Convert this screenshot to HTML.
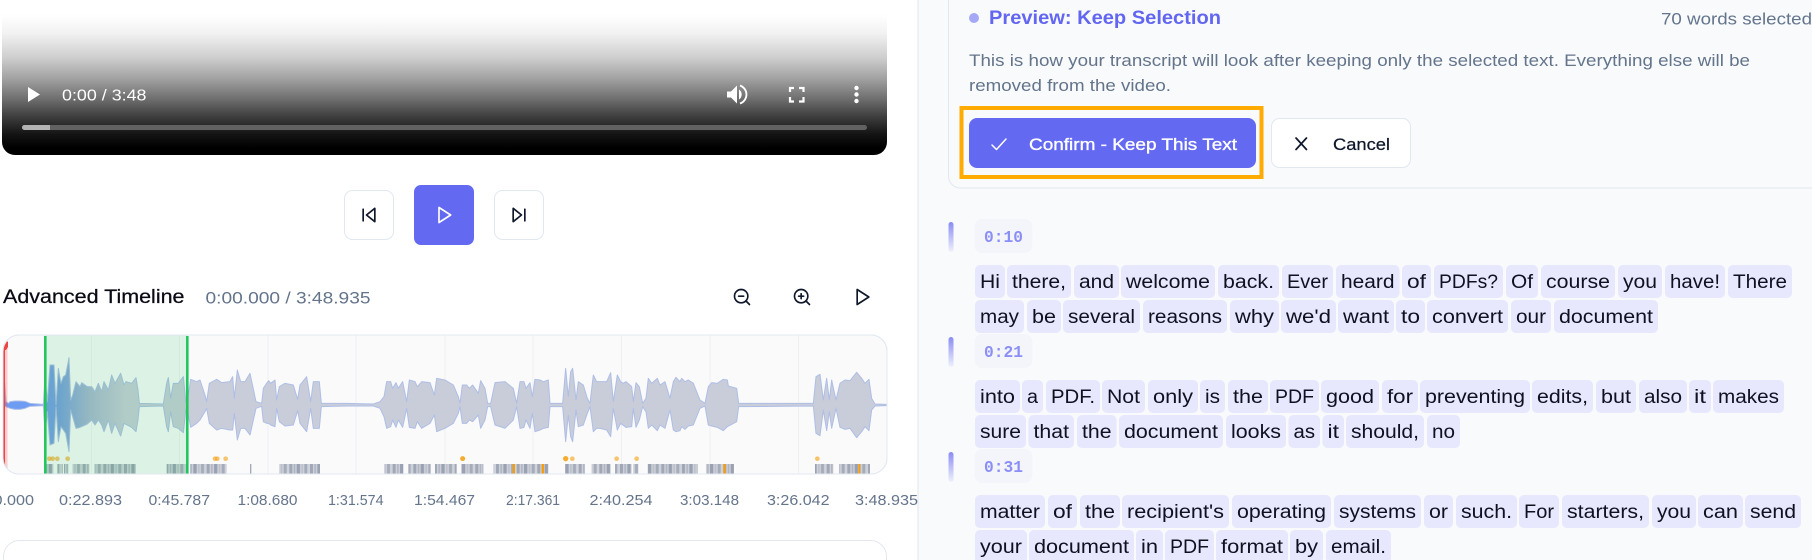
<!DOCTYPE html>
<html><head><meta charset="utf-8"><title>Editor</title>
<style>
html,body{margin:0;padding:0;background:#fff;width:1812px;height:560px;overflow:hidden}
svg{display:block;position:absolute;left:0;top:0}
text{font-family:"Liberation Sans",sans-serif}
.w rect{height:33px;y:-23px;rx:5px;ry:5px;fill:#e7e7fd}
.w text{font-size:19px;fill:#0f1020}
.lb text{font-size:15px;fill:#64748b}
.ic{fill:none;stroke:#0f172a;stroke-width:2;stroke-linecap:round;stroke-linejoin:round}
.b{fill:#fff;stroke:#e2e8f0;stroke-width:1}
.chip{fill:#f3f5fa}
.mono{font-family:"Liberation Mono",monospace;font-size:17px;font-weight:700;fill:#8b8ef5}
</style></head><body>
<svg xmlns="http://www.w3.org/2000/svg" width="1812" height="560" viewBox="0 0 1812 560">
<defs>
<linearGradient id="vg" x1="0" y1="0" x2="0" y2="1">
<stop offset="0" stop-color="#fff"/><stop offset=".13" stop-color="#f2f2f2"/><stop offset=".3" stop-color="#cfcfcf"/><stop offset=".45" stop-color="#a3a3a3"/><stop offset=".6" stop-color="#6e6e6e"/><stop offset=".72" stop-color="#404040"/><stop offset=".85" stop-color="#141414"/><stop offset=".95" stop-color="#000"/><stop offset="1" stop-color="#000"/>
</linearGradient>
<linearGradient id="wf" gradientUnits="userSpaceOnUse" x1="0" y1="0" x2="900" y2="0">
<stop offset="0" stop-color="#6e9cf3"/><stop offset=".12" stop-color="#6e9cf3"/><stop offset=".2" stop-color="#7a9fe0"/><stop offset=".3" stop-color="#aab7d2"/><stop offset=".42" stop-color="#c9cdd9"/><stop offset="1" stop-color="#c9cdd9"/>
</linearGradient>
<linearGradient id="bar" x1="0" y1="0" x2="0" y2="1"><stop offset="0" stop-color="#8a8cf5"/><stop offset="1" stop-color="#8a8cf5" stop-opacity=".08"/></linearGradient>
<pattern id="st" patternUnits="userSpaceOnUse" width="62" height="30" x="0" y="552">
<rect width="62" height="30" fill="#cfd2da"/>
<rect x="0" width="9" height="30" fill="#a0a7b6"/><rect x="13" width="5" height="30" fill="#b0b5c2"/><rect x="22" width="10" height="30" fill="#99a1b2"/><rect x="36" width="5" height="30" fill="#bcc0cb"/><rect x="45" width="9" height="30" fill="#a5acba"/>
</pattern>
<clipPath id="tl"><rect x="3.5" y="335.5" width="884" height="139" rx="16"/></clipPath>
<clipPath id="left"><rect x="0" y="0" width="918" height="560"/></clipPath>
</defs>

<!-- video -->
<path d="M2 15H887V142a13 13 0 0 1-13 13H15a13 13 0 0 1-13-13Z" fill="url(#vg)"/>
<path d="M28 87L40 94.5L28 102Z" fill="#fff"/>
<text x="62" y="100.500" font-size="16" fill="#fff" textLength="84.500" lengthAdjust="spacingAndGlyphs">0:00 / 3:48</text>
<rect x="22" y="125" width="845" height="5" rx="2.5" fill="#616161"/>
<path d="M24.5 125H50V130H24.5a2.5 2.5 0 0 1 0-5Z" fill="#b3b3b3"/>
<path d="M727 91.500h4l6-6v18l-6-6h-4Z" fill="#fff"/>
<path d="M739 89.500a6 6 0 0 1 0 10Z" fill="#fff"/><path d="M740 85.500a9.500 9.500 0 0 1 0 18" fill="none" stroke="#fff" stroke-width="1.800"/>
<path d="M790 92v-4h4M799 88h4.500v4M803.500 97v4.500h-4.500M794 101.500h-4v-4.500" fill="none" stroke="#fff" stroke-width="2.200"/>
<circle cx="856.500" cy="88" r="2.200" fill="#fff"/><circle cx="856.500" cy="94.500" r="2.200" fill="#fff"/><circle cx="856.500" cy="101" r="2.200" fill="#fff"/>

<!-- transport -->
<rect class="b" x="344.5" y="190.5" width="49" height="49" rx="8"/>
<g class="ic" transform="translate(359 205) scale(.8333)"><polygon points="19 20 9 12 19 4"/><line x1="5" y1="19" x2="5" y2="5"/></g>
<rect x="414" y="185" width="60" height="60" rx="7" fill="#6469f2"/>
<g class="ic" transform="translate(434 205) scale(.8333)" style="stroke:#fff"><polygon points="6 3 20 12 6 21"/></g>
<rect class="b" x="494.5" y="190.5" width="49" height="49" rx="8"/>
<g class="ic" transform="translate(509 205) scale(.8333)"><polygon points="5 4 15 12 5 20"/><line x1="19" y1="5" x2="19" y2="19"/></g>

<!-- timeline header -->
<text x="3" y="303" font-size="19" fill="#0a0a14" stroke="#0a0a14" stroke-width=".25" textLength="181.5" lengthAdjust="spacingAndGlyphs">Advanced Timeline</text>
<text x="205.5" y="303.500" font-size="17" fill="#64748b" textLength="165" lengthAdjust="spacingAndGlyphs">0:00.000 / 3:48.935</text>
<g class="ic" transform="translate(732 287) scale(.8333)"><circle cx="11" cy="11" r="8"/><line x1="21" y1="21" x2="16.65" y2="16.65"/><line x1="8" y1="11" x2="14" y2="11"/></g>
<g class="ic" transform="translate(792 287) scale(.8333)"><circle cx="11" cy="11" r="8"/><line x1="21" y1="21" x2="16.65" y2="16.65"/><line x1="11" y1="8" x2="11" y2="14"/><line x1="8" y1="11" x2="14" y2="11"/></g>
<g class="ic" transform="translate(853 287) scale(.8333)"><polygon points="5 3 19 12 5 21"/></g>

<!-- timeline -->
<rect x="3" y="335" width="884" height="139" rx="16" fill="#fafafb" stroke="#e2e8f0"/>
<g clip-path="url(#tl)">
<g stroke="#f0f0f3" stroke-width="1"><line x1="91.5" y1="335" x2="91.5" y2="474"/><line x1="179.5" y1="335" x2="179.5" y2="474"/><line x1="268" y1="335" x2="268" y2="474"/><line x1="356" y1="335" x2="356" y2="474"/><line x1="445" y1="335" x2="445" y2="474"/><line x1="533" y1="335" x2="533" y2="474"/><line x1="621.5" y1="335" x2="621.5" y2="474"/><line x1="710" y1="335" x2="710" y2="474"/><line x1="798.5" y1="335" x2="798.5" y2="474"/></g>
<g transform="translate(0 340) scale(.33333)">
<polygon fill="url(#wf)" stroke="#aebee6" stroke-width="3" stroke-linejoin="round" points="12,192 14,130 18,185 25,190 30,185 45,183 60,183 75,184 90,190 130,193 135,110 142,185 150,75 162,75 168,195 175,85 183,130 190,110 197,105 207,53 212,180 218,165 228,125 240,140 245,128 262,140 275,140 285,155 295,130 305,155 312,125 325,150 335,105 345,130 362,100 372,135 378,125 395,130 408,113 414,150 418,190 490,192 500,130 505,113 512,175 520,130 535,130 550,110 558,190 565,165 572,118 590,125 600,120 615,165 620,185 628,130 650,118 665,128 690,125 698,110 703,175 712,90 722,125 735,125 750,100 768,185 785,190 790,145 800,130 806,122 812,130 825,120 830,180 838,140 855,130 880,135 893,178 900,135 920,110 932,185 940,125 958,125 964,190 1040,190 1120,192 1140,185 1152,170 1160,125 1172,125 1178,145 1188,128 1195,145 1208,125 1220,185 1228,120 1245,125 1252,140 1265,125 1290,128 1303,165 1310,115 1335,120 1360,135 1375,170 1380,190 1387,135 1400,135 1408,145 1418,135 1435,160 1442,122 1455,145 1463,190 1472,190 1485,128 1515,125 1540,145 1550,190 1560,125 1572,125 1578,145 1590,128 1597,170 1605,118 1620,120 1630,125 1645,120 1650,190 1688,190 1697,85 1705,170 1712,95 1718,85 1728,180 1735,125 1750,135 1762,175 1770,190 1780,105 1790,125 1800,125 1820,125 1832,98 1840,185 1852,105 1862,125 1870,130 1878,125 1895,140 1900,185 1908,128 1918,140 1928,190 1938,175 1945,115 1955,130 1972,115 1980,135 1995,125 2010,175 2020,125 2028,112 2040,125 2045,115 2055,125 2065,120 2080,130 2100,180 2115,190 2125,140 2135,128 2152,130 2170,118 2182,120 2185,138 2210,145 2216,190 2440,190 2448,110 2460,103 2470,180 2480,115 2488,180 2495,120 2508,180 2520,130 2535,120 2550,122 2570,97 2585,115 2595,130 2607,118 2615,175 2625,192 2658,193 2658,197 2625,198 2615,210 2607,272 2595,260 2585,275 2570,293 2550,265 2535,268 2520,262 2508,205 2495,265 2488,215 2480,272 2470,210 2460,287 2448,280 2440,198 2216,200 2210,245 2182,260 2170,272 2152,262 2135,258 2125,255 2115,198 2100,205 2080,255 2065,258 2055,268 2045,260 2040,272 2028,275 2020,270 2010,210 1995,265 1980,255 1972,272 1955,255 1945,265 1938,215 1928,200 1918,240 1908,262 1900,205 1895,260 1878,262 1862,250 1852,270 1840,205 1832,290 1820,270 1800,265 1790,265 1780,275 1770,200 1762,220 1750,255 1735,260 1728,210 1718,305 1712,290 1705,225 1697,305 1688,200 1650,200 1645,262 1630,265 1620,270 1605,275 1597,220 1590,265 1578,240 1572,262 1560,265 1550,200 1540,240 1515,265 1485,255 1472,200 1463,200 1455,240 1442,265 1435,225 1418,245 1408,240 1400,250 1387,250 1380,200 1375,220 1360,250 1335,265 1310,275 1303,225 1290,250 1265,265 1252,245 1245,265 1228,262 1220,205 1208,262 1195,240 1188,262 1178,240 1172,260 1160,265 1152,230 1140,205 1120,198 1040,198 964,200 958,265 940,265 932,205 920,275 900,250 893,212 880,255 855,258 838,245 830,205 825,260 812,255 806,250 800,250 790,245 785,199 768,205 750,285 735,265 722,265 712,300 703,220 698,270 690,270 665,265 650,270 628,250 620,205 615,215 600,240 590,250 572,262 565,225 558,205 550,278 535,265 520,260 512,215 505,275 500,260 490,198 418,200 414,240 408,275 395,262 372,250 362,288 345,250 335,280 325,240 312,275 305,255 295,240 285,255 275,240 262,252 240,262 228,265 218,230 212,210 207,335 197,280 190,270 183,260 175,305 168,200 162,310 150,315 142,215 135,280 130,197 90,199 75,205 60,208 45,208 30,205 25,203 12,198"/>
</g>
<g transform="translate(0 280) scale(.33333)">
<g fill="#f59e0b" fill-opacity=".6"><circle cx="148" cy="536" r="7"/><circle cx="158" cy="536" r="7"/><circle cx="172" cy="536" r="7"/><circle cx="203" cy="536" r="7"/><circle cx="645" cy="536" r="7"/><circle cx="652" cy="536" r="7"/><circle cx="677" cy="536" r="7"/><circle cx="1388" cy="536" r="7.5" fill-opacity=".85"/><circle cx="1697" cy="536" r="8" fill-opacity=".85"/><circle cx="1717" cy="536" r="7"/><circle cx="1850" cy="536" r="7"/><circle cx="1910" cy="536" r="7"/><circle cx="2452" cy="536" r="7"/></g>
<g fill="url(#st)"><rect x="135" y="552" width="25" height="30"/><rect x="172" y="552" width="16" height="30"/><rect x="192" y="552" width="13" height="30"/><rect x="218" y="552" width="50" height="30"/><rect x="283" y="552" width="125" height="30"/><rect x="500" y="552" width="58" height="30"/><rect x="570" y="552" width="110" height="30"/><rect x="750" y="552" width="5" height="30"/><rect x="838" y="552" width="122" height="30"/><rect x="1153" y="552" width="57" height="30"/><rect x="1225" y="552" width="67" height="30"/><rect x="1305" y="552" width="65" height="30"/><rect x="1383" y="552" width="67" height="30"/><rect x="1480" y="552" width="165" height="30"/><rect x="1695" y="552" width="60" height="30"/><rect x="1775" y="552" width="57" height="30"/><rect x="1845" y="552" width="50" height="30"/><rect x="1900" y="552" width="15" height="30"/><rect x="1943" y="552" width="150" height="30"/><rect x="2118" y="552" width="84" height="30"/><rect x="2445" y="552" width="55" height="30"/><rect x="2517" y="552" width="93" height="30"/></g>
<g fill="#f59e0b"><rect x="1538" y="552" width="7" height="30"/><rect x="1625" y="552" width="7" height="30"/><rect x="2170" y="552" width="7" height="30"/><rect x="2575" y="552" width="6" height="30"/></g>
</g>
<rect x="44" y="335" width="144" height="139" fill="#22c55e" fill-opacity=".14"/>
<rect x="44" y="336" width="2.6" height="138" fill="#22c55e"/><rect x="186" y="336" width="2.6" height="138" fill="#22c55e"/>
<rect x="3" y="335" width="2" height="139" fill="#ef4444"/><rect x="5" y="335" width="2.500" height="139" fill="#ef4444" fill-opacity=".25"/>
<path d="M3 345a3 5 0 0 1 5-3v5l-2 3h-3Z" fill="#ef4444"/>
</g>
<rect x="3" y="335" width="884" height="139" rx="16" fill="none" stroke="#e2e8f0"/>

<!-- labels -->
<g class="lb" clip-path="url(#left)">
<text x="-29" y="505" textLength="63" lengthAdjust="spacingAndGlyphs">0:00.000</text>
<text x="59" y="505" textLength="63" lengthAdjust="spacingAndGlyphs">0:22.893</text>
<text x="148.5" y="505" textLength="61.5" lengthAdjust="spacingAndGlyphs">0:45.787</text>
<text x="237.5" y="505" textLength="60" lengthAdjust="spacingAndGlyphs">1:08.680</text>
<text x="328" y="505" textLength="55.5" lengthAdjust="spacingAndGlyphs">1:31.574</text>
<text x="414" y="505" textLength="61" lengthAdjust="spacingAndGlyphs">1:54.467</text>
<text x="506" y="505" textLength="54" lengthAdjust="spacingAndGlyphs">2:17.361</text>
<text x="589.5" y="505" textLength="63" lengthAdjust="spacingAndGlyphs">2:40.254</text>
<text x="680" y="505" textLength="59" lengthAdjust="spacingAndGlyphs">3:03.148</text>
<text x="767" y="505" textLength="62.5" lengthAdjust="spacingAndGlyphs">3:26.042</text>
<text x="855" y="505" textLength="63" lengthAdjust="spacingAndGlyphs">3:48.935</text>
</g>
<rect x="3.5" y="540.5" width="883" height="40" rx="16" fill="#fff" stroke="#e2e8f0"/>

<!-- right panel -->
<rect x="918" y="0" width="894" height="560" fill="#f8fafc"/>
<line x1="918" y1="0" x2="918" y2="560" stroke="#e2e8f0"/>
<rect x="948.5" y="-30" width="900" height="218" rx="12" fill="#f8fafc" stroke="#e2e8f0"/>
<circle cx="974" cy="18" r="5" fill="#a5a8f6"/>
<text x="989" y="24" font-size="19" font-weight="700" fill="#6366f1" textLength="232" lengthAdjust="spacingAndGlyphs">Preview: Keep Selection</text>
<text x="1661" y="24.5" font-size="17" fill="#64748b" textLength="151" lengthAdjust="spacingAndGlyphs">70 words selected</text>
<text x="969" y="66" font-size="17" fill="#64748b" textLength="781" lengthAdjust="spacingAndGlyphs">This is how your transcript will look after keeping only the selected text. Everything else will be</text>
<text x="969" y="91" font-size="17" fill="#64748b" textLength="202" lengthAdjust="spacingAndGlyphs">removed from the video.</text>
<rect x="961.5" y="108" width="300" height="69" fill="none" stroke="#ffab00" stroke-width="4"/>
<rect x="969" y="118" width="287" height="50" rx="8" fill="#6469f2"/>
<path d="M992 145l4.5 4.5L1006 139" fill="none" stroke="#fff" stroke-width="1.500" stroke-linecap="round" stroke-linejoin="round"/>
<text x="1029" y="150" font-size="17" fill="#fff" stroke="#fff" stroke-width=".35" textLength="208" lengthAdjust="spacingAndGlyphs">Confirm - Keep This Text</text>
<rect x="1271.5" y="118.5" width="139" height="49" rx="8" fill="#fff" stroke="#e2e8f0"/>
<path d="M1296 138l10.500 11.500M1306.500 138L1296 149.500" fill="none" stroke="#0f172a" stroke-width="1.700" stroke-linecap="round"/>
<text x="1333" y="150" font-size="17" fill="#0f172a" stroke="#0f172a" stroke-width=".25" textLength="57" lengthAdjust="spacingAndGlyphs">Cancel</text>

<!-- segment markers -->
<rect x="948.500" y="222" width="5" height="30" rx="2.500" fill="url(#bar)"/>
<rect class="chip" x="974.500" y="219" width="58" height="34" rx="8"/>
<text class="mono" x="984" y="242" textLength="39" lengthAdjust="spacingAndGlyphs">0:10</text>
<rect x="948.500" y="337" width="5" height="30" rx="2.500" fill="url(#bar)"/>
<rect class="chip" x="974.500" y="334" width="58" height="34" rx="8"/>
<text class="mono" x="984" y="357" textLength="39" lengthAdjust="spacingAndGlyphs">0:21</text>
<rect x="948.500" y="452" width="5" height="30" rx="2.500" fill="url(#bar)"/>
<rect class="chip" x="974.500" y="449" width="58" height="34" rx="8"/>
<text class="mono" x="984" y="472" textLength="39" lengthAdjust="spacingAndGlyphs">0:31</text>

<!-- rows -->
<g class="w" transform="translate(0 288)">
<rect x="975" width="30"/><text x="980" textLength="20" lengthAdjust="spacingAndGlyphs">Hi</text>
<rect x="1007" width="64"/><text x="1012" textLength="54" lengthAdjust="spacingAndGlyphs">there,</text>
<rect x="1074" width="45"/><text x="1079" textLength="35" lengthAdjust="spacingAndGlyphs">and</text>
<rect x="1121" width="94"/><text x="1126" textLength="84" lengthAdjust="spacingAndGlyphs">welcome</text>
<rect x="1218" width="61"/><text x="1223" textLength="51" lengthAdjust="spacingAndGlyphs">back.</text>
<rect x="1282" width="51"/><text x="1287" textLength="41" lengthAdjust="spacingAndGlyphs">Ever</text>
<rect x="1336" width="63.500"/><text x="1341" textLength="53.500" lengthAdjust="spacingAndGlyphs">heard</text>
<rect x="1402" width="29"/><text x="1407" textLength="19" lengthAdjust="spacingAndGlyphs">of</text>
<rect x="1434" width="69"/><text x="1439" textLength="59" lengthAdjust="spacingAndGlyphs">PDFs?</text>
<rect x="1506" width="32"/><text x="1511" textLength="22" lengthAdjust="spacingAndGlyphs">Of</text>
<rect x="1541" width="74"/><text x="1546" textLength="64" lengthAdjust="spacingAndGlyphs">course</text>
<rect x="1618" width="44"/><text x="1623" textLength="34" lengthAdjust="spacingAndGlyphs">you</text>
<rect x="1665" width="60"/><text x="1670" textLength="50" lengthAdjust="spacingAndGlyphs">have!</text>
<rect x="1728" width="64"/><text x="1733" textLength="54" lengthAdjust="spacingAndGlyphs">There</text>
</g>
<g class="w" transform="translate(0 323)">
<rect x="975" width="49"/><text x="980" textLength="39" lengthAdjust="spacingAndGlyphs">may</text>
<rect x="1027" width="34"/><text x="1032" textLength="24" lengthAdjust="spacingAndGlyphs">be</text>
<rect x="1063" width="77"/><text x="1068" textLength="67" lengthAdjust="spacingAndGlyphs">several</text>
<rect x="1143" width="84"/><text x="1148" textLength="74" lengthAdjust="spacingAndGlyphs">reasons</text>
<rect x="1230" width="49"/><text x="1235" textLength="39" lengthAdjust="spacingAndGlyphs">why</text>
<rect x="1281" width="55"/><text x="1286" textLength="45" lengthAdjust="spacingAndGlyphs">we'd</text>
<rect x="1338" width="56"/><text x="1343" textLength="46" lengthAdjust="spacingAndGlyphs">want</text>
<rect x="1396" width="29"/><text x="1401" textLength="19" lengthAdjust="spacingAndGlyphs">to</text>
<rect x="1427" width="81"/><text x="1432" textLength="71" lengthAdjust="spacingAndGlyphs">convert</text>
<rect x="1511" width="40"/><text x="1516" textLength="30" lengthAdjust="spacingAndGlyphs">our</text>
<rect x="1554" width="104"/><text x="1559" textLength="94" lengthAdjust="spacingAndGlyphs">document</text>
</g>
<g class="w" transform="translate(0 403)">
<rect x="975" width="45"/><text x="980" textLength="35" lengthAdjust="spacingAndGlyphs">into</text>
<rect x="1022" width="21"/><text x="1027" textLength="11" lengthAdjust="spacingAndGlyphs">a</text>
<rect x="1046" width="54"/><text x="1051" textLength="44" lengthAdjust="spacingAndGlyphs">PDF.</text>
<rect x="1102" width="43"/><text x="1107" textLength="33" lengthAdjust="spacingAndGlyphs">Not</text>
<rect x="1148" width="50"/><text x="1153" textLength="40" lengthAdjust="spacingAndGlyphs">only</text>
<rect x="1200" width="25"/><text x="1205" textLength="15" lengthAdjust="spacingAndGlyphs">is</text>
<rect x="1228" width="40"/><text x="1233" textLength="30" lengthAdjust="spacingAndGlyphs">the</text>
<rect x="1270" width="49"/><text x="1275" textLength="39" lengthAdjust="spacingAndGlyphs">PDF</text>
<rect x="1321" width="58"/><text x="1326" textLength="48" lengthAdjust="spacingAndGlyphs">good</text>
<rect x="1382" width="36"/><text x="1387" textLength="26" lengthAdjust="spacingAndGlyphs">for</text>
<rect x="1420" width="110"/><text x="1425" textLength="100" lengthAdjust="spacingAndGlyphs">preventing</text>
<rect x="1532" width="61"/><text x="1537" textLength="51" lengthAdjust="spacingAndGlyphs">edits,</text>
<rect x="1596" width="40"/><text x="1601" textLength="30" lengthAdjust="spacingAndGlyphs">but</text>
<rect x="1639" width="48"/><text x="1644" textLength="38" lengthAdjust="spacingAndGlyphs">also</text>
<rect x="1689" width="22"/><text x="1694" textLength="12" lengthAdjust="spacingAndGlyphs">it</text>
<rect x="1713" width="71"/><text x="1718" textLength="61" lengthAdjust="spacingAndGlyphs">makes</text>
</g>
<g class="w" transform="translate(0 438)">
<rect x="975" width="51"/><text x="980" textLength="41" lengthAdjust="spacingAndGlyphs">sure</text>
<rect x="1028.500" width="45.500"/><text x="1033.500" textLength="35.500" lengthAdjust="spacingAndGlyphs">that</text>
<rect x="1077" width="39.500"/><text x="1082" textLength="29.500" lengthAdjust="spacingAndGlyphs">the</text>
<rect x="1119" width="104"/><text x="1124" textLength="94" lengthAdjust="spacingAndGlyphs">document</text>
<rect x="1226" width="60"/><text x="1231" textLength="50" lengthAdjust="spacingAndGlyphs">looks</text>
<rect x="1288.500" width="31.500"/><text x="1293.500" textLength="21.500" lengthAdjust="spacingAndGlyphs">as</text>
<rect x="1322.500" width="21.500"/><text x="1327.500" textLength="11.500" lengthAdjust="spacingAndGlyphs">it</text>
<rect x="1346" width="78"/><text x="1351" textLength="68" lengthAdjust="spacingAndGlyphs">should,</text>
<rect x="1427" width="33"/><text x="1432" textLength="23" lengthAdjust="spacingAndGlyphs">no</text>
</g>
<g class="w" transform="translate(0 518)">
<rect x="975" width="70"/><text x="980" textLength="60" lengthAdjust="spacingAndGlyphs">matter</text>
<rect x="1048" width="29"/><text x="1053" textLength="19" lengthAdjust="spacingAndGlyphs">of</text>
<rect x="1080" width="40"/><text x="1085" textLength="30" lengthAdjust="spacingAndGlyphs">the</text>
<rect x="1122" width="107"/><text x="1127" textLength="97" lengthAdjust="spacingAndGlyphs">recipient's</text>
<rect x="1232" width="99"/><text x="1237" textLength="89" lengthAdjust="spacingAndGlyphs">operating</text>
<rect x="1334" width="87"/><text x="1339" textLength="77" lengthAdjust="spacingAndGlyphs">systems</text>
<rect x="1424" width="29"/><text x="1429" textLength="19" lengthAdjust="spacingAndGlyphs">or</text>
<rect x="1456" width="61"/><text x="1461" textLength="51" lengthAdjust="spacingAndGlyphs">such.</text>
<rect x="1519" width="40"/><text x="1524" textLength="30" lengthAdjust="spacingAndGlyphs">For</text>
<rect x="1562" width="87"/><text x="1567" textLength="77" lengthAdjust="spacingAndGlyphs">starters,</text>
<rect x="1652" width="44"/><text x="1657" textLength="34" lengthAdjust="spacingAndGlyphs">you</text>
<rect x="1698" width="45"/><text x="1703" textLength="35" lengthAdjust="spacingAndGlyphs">can</text>
<rect x="1745" width="56"/><text x="1750" textLength="46" lengthAdjust="spacingAndGlyphs">send</text>
</g>
<g class="w" transform="translate(0 553)">
<rect x="975" width="52"/><text x="980" textLength="42" lengthAdjust="spacingAndGlyphs">your</text>
<rect x="1029" width="105"/><text x="1034" textLength="95" lengthAdjust="spacingAndGlyphs">document</text>
<rect x="1136" width="27"/><text x="1141" textLength="17" lengthAdjust="spacingAndGlyphs">in</text>
<rect x="1165" width="49"/><text x="1170" textLength="39" lengthAdjust="spacingAndGlyphs">PDF</text>
<rect x="1216" width="72"/><text x="1221" textLength="62" lengthAdjust="spacingAndGlyphs">format</text>
<rect x="1290" width="33"/><text x="1295" textLength="23" lengthAdjust="spacingAndGlyphs">by</text>
<rect x="1326" width="65"/><text x="1331" textLength="55" lengthAdjust="spacingAndGlyphs">email.</text>
</g>
</svg>
</body></html>
